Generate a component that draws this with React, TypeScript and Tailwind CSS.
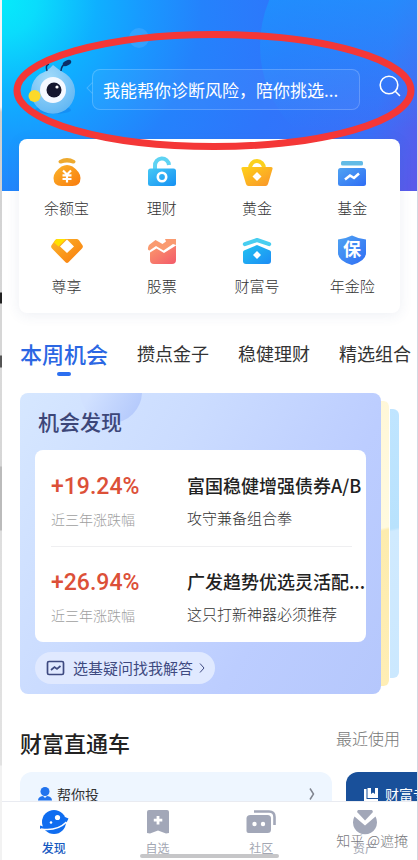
import type { ReactNode } from "react";

function Defs() {
  const grads: [string, string, string][] = [
    ["gOrange", "#fbb62c", "#f97a0c"],
    ["gGold", "#ffd21a", "#f9932a"],
    ["gCyan", "#45c8f5", "#1590f3"],
    ["gBlue", "#4fa3f2", "#2f6df5"],
    ["gRed", "#fb9a6c", "#f35a6a"],
    ["gSky", "#22c3f0", "#1c8cf5"],
  ];
  return (
    <svg className="absolute size-0" aria-hidden="true">
      <defs>
        {grads.map(([id, a, b]) => (
          <linearGradient key={id} id={id} x1="0" y1="0" x2="1" y2="1">
            <stop offset="0" stopColor={a} />
            <stop offset="1" stopColor={b} />
          </linearGradient>
        ))}
        <linearGradient id="gBlob" x1="0" y1="0" x2="0" y2="1">
          <stop offset="0.3" stopColor="#189cff" stopOpacity="0.6" />
          <stop offset="0.85" stopColor="#189cff" stopOpacity="0" />
        </linearGradient>
        <radialGradient id="gBody" cx="0.4" cy="0.3" r="0.8">
          <stop offset="0" stopColor="#a5dcfa" />
          <stop offset="1" stopColor="#5cb4f3" />
        </radialGradient>
      </defs>
    </svg>
  );
}

function Icon({ children }: { children: ReactNode }) {
  return (
    <svg viewBox="0 0 32 32" className="size-8" aria-hidden="true">
      {children}
    </svg>
  );
}

const services: { label: string; icon: ReactNode }[] = [
  {
    label: "余额宝",
    icon: (
      <Icon>
        <path d="M7.600 6.200Q7 5 8.300 4.200Q16 0 23.700 4.200Q25 5 24.400 6.200Q23.500 8 21.800 7.400Q16 5.400 10.200 7.400Q8.500 8 7.600 6.200Z" fill="#eda92e" />
        <path d="M10.500 10.500Q16 7.500 21.500 10.500Q29.500 16 29.500 22Q29.500 30 21.500 30H10.500Q2.500 30 2.500 22Q2.500 16 10.500 10.500Z" fill="url(#gOrange)" />
        <path d="M12 14.500l4 4 4-4M16 18.500v8M11.500 19.300h9M11.500 23h9" stroke="#fff" strokeWidth="2.200" fill="none" />
      </Icon>
    ),
  },
  {
    label: "理财",
    icon: (
      <Icon>
        <path d="M9 13V10a7 7 0 0 1 14-1" stroke="#5ed3f3" strokeWidth="4" fill="none" />
        <rect x="2" y="12.500" width="28" height="17.500" rx="2.500" fill="url(#gCyan)" />
        <circle cx="16" cy="21" r="4.200" fill="none" stroke="#fff" strokeWidth="2.600" />
      </Icon>
    ),
  },
  {
    label: "黄金",
    icon: (
      <Icon>
        <path d="M9 12.500a7 7.500 0 0 1 14 0" stroke="#fbd11e" strokeWidth="4" fill="none" />
        <path d="M2 11h28a1.500 1.500 0 0 1 1.500 2l-4.500 15q-.6 2-2.500 2h-17q-1.900 0-2.500-2L.5 13A1.500 1.500 0 0 1 2 11z" fill="url(#gGold)" />
        <path d="M16 16l4.500 4.500L16 25l-4.500-4.500z" fill="#fff" />
      </Icon>
    ),
  },
  {
    label: "基金",
    icon: (
      <Icon>
        <rect x="5" y="5" width="22" height="4.500" rx="1.500" fill="#63bbe6" />
        <rect x="2" y="12" width="28" height="18" rx="2.500" fill="url(#gBlue)" />
        <path d="M9 23.500l5-4 4 2.500 5-4.500" stroke="#fff" strokeWidth="2.500" fill="none" />
      </Icon>
    ),
  },
  {
    label: "尊享",
    icon: (
      <Icon>
        <path d="M6.500 5h19q1.500 0 2.500 1.200l3.500 5q1 1.800-.5 3.300L17.500 28.300q-1.500 1.500-3 0L1 14.500Q-.5 13 .5 11.200l3.500-5Q5 5 6.500 5z" fill="url(#gOrange)" />
        <path d="M6 5h9L7.500 12.500 3 8.500 4.500 6z" fill="#ffe100" />
        <path d="M16 5.500l7 7L16 19l-7-6.500z" fill="#fff" />
      </Icon>
    ),
  },
  {
    label: "股票",
    icon: (
      <Icon>
        <path d="M3 11l6.500-5 7 4 3.500-2.500-1-2.500h11v6l-3-1-9.500 6.500-7.500-4.500-6.500 4.500q-3-.500-.5-5.500z" fill="#fa9a70" />
        <path d="M4 18.500l6.500-4 7.500 4.500L30 11.500V26q0 4-4 4H8q-4 0-4-4z" fill="url(#gRed)" />
      </Icon>
    ),
  },
  {
    label: "财富号",
    icon: (
      <Icon>
        <path d="M3.800 10.200L16 6l12.200 4.200" stroke="#48cef0" strokeWidth="4" strokeLinecap="round" strokeLinejoin="round" fill="none" />
        <path d="M3 16.500L16 11l13 5.500q1 .5 1 1.500v9q0 3-3 3H5q-3 0-3-3v-9q0-1 1-1.500z" fill="url(#gSky)" />
        <path d="M16 17l4 4-4 4-4-4z" fill="#fff" />
      </Icon>
    ),
  },
  {
    label: "年金险",
    icon: (
      <Icon>
        <path d="M16 1.500q7 3.500 14 4V19q0 8-14 12Q2 27 2 19V5.500q7-.5 14-4z" fill="url(#gBlue)" />
        <text x="16" y="22" textAnchor="middle" fontSize="18" fontWeight="700" fill="#fff">保</text>
      </Icon>
    ),
  },
];

const funds = [
  { rate: "+19.24%", name: "富国稳健增强债券A/B", note: "攻守兼备组合拳" },
  { rate: "+26.94%", name: "广发趋势优选灵活配...", note: "这只打新神器必须推荐" },
];

function Mascot() {
  return (
    <svg viewBox="0 0 50 60" className="h-15 w-[50px] shrink-0" aria-hidden="true">
      <ellipse cx="27" cy="53" rx="18" ry="4" fill="#1560d8" opacity=".25" />
      <path d="M27 8Q34 14 40 17A22 22 0 1 1 14 17Q22 14 27 8z" fill="url(#gBody)" />
      <path d="M21 14q-2-6 2-7M35 14q0-5 5-8" stroke="#0c2f66" strokeWidth="1.500" fill="none" />
      <ellipse cx="41" cy="6" rx="4.500" ry="2.500" transform="rotate(-25 41 6)" fill="#0c2f66" />
      <circle cx="27" cy="33" r="13" fill="#f5f9ff" />
      <circle cx="28" cy="33" r="7.500" fill="#15172e" />
      <circle cx="31" cy="30" r="1.600" fill="#fff" />
      <circle cx="8.500" cy="39" r="6" fill="#fbd92a" />
    </svg>
  );
}

export default function App() {
  return (
    <div className="relative flex h-screen overflow-hidden bg-white font-['Noto_Sans_CJK_SC',sans-serif] text-[#333]">
      <Defs />
      <div className="w-[2px] shrink-0 bg-[linear-gradient(180deg,#f6f6f6_0,#f6f6f6_107px,#cfcfcf_112px,#d6d6d6_292px,#222_293px,#222_303px,#d6d6d6_304px,#d6d6d6_355px,#555_356px,#555_367px,#dadada_368px,#d6d6d6_466px,#bbb_467px,#bbb_530px,#dedede_531px,#e2e2e2_765px,#f2f2f2_766px)]" />
      <div className="relative flex min-w-0 flex-1 flex-col border-r border-[#d5d8e2]">
        <main className="min-h-0 flex-1 overflow-hidden">
          <header className="relative h-[191px] overflow-hidden bg-[radial-gradient(circle_at_0_0,#05ebfb_0,#0adcfc_35px,#0fb0ff_95px,#189aff_140px,#2482fc_200px,#2f75fb_290px,#3a70f8_390px,#5a5aea_450px)]">
            <svg className="absolute inset-0 size-full" aria-hidden="true">
              <circle cx="376" cy="46" r="118" fill="url(#gBlob)" />
              <circle cx="137" cy="38" r="10" fill="#7fc0ff" opacity=".25" />
            </svg>
            <div className="relative flex items-start pl-6 pt-[57px]">
              <Mascot />
              <label className="relative ml-4 mt-3 flex h-[41px] min-w-0 flex-1 items-center rounded-lg border border-white/20 bg-white/5 px-2.5">
                <span className="absolute -left-[5px] top-3.5 size-2 rotate-45 border-b border-l border-white/20" />
                <input
                  aria-label="搜索"
                  readOnly
                  value="我能帮你诊断风险，陪你挑选..."
                  className="w-full min-w-0 bg-transparent text-[17px] text-white outline-none"
                />
              </label>
              <button aria-label="搜索" className="ml-[17px] mr-3.5 mt-4">
                <svg viewBox="0 0 26 26" className="size-[26px]" fill="none" stroke="#fff" strokeWidth="1.600" strokeLinecap="round">
                  <circle cx="12" cy="12" r="8.800" />
                  <path d="M18.500 18.500l4 4" />
                </svg>
              </button>
            </div>
          </header>

          <section className="relative mx-[17px] -mt-13 grid h-[174px] grid-cols-4 content-start gap-y-1 rounded-lg bg-white pt-[17px] shadow-[0_2px_14px_rgba(60,80,130,0.09)]">
            {services.map((s) => (
              <button key={s.label} className="flex h-[74px] flex-col items-center text-[15px] font-light text-[#333]">
                {s.icon}
                <span className="mt-2 leading-6">{s.label}</span>
              </button>
            ))}
          </section>

          <nav className="mt-6 flex h-[42px] items-start gap-[29px] overflow-hidden whitespace-nowrap pl-[18px] text-[18px] leading-8">
            <button className="flex flex-col items-center text-[22px] font-medium text-[#2b67e3]">
              本周机会
              <span className="mt-[3px] h-1 w-3.5 rounded-full bg-[#2c6ff0]" />
            </button>
            <button>攒点金子</button>
            <button>稳健理财</button>
            <button>精选组合</button>
          </nav>

          <section className="relative ml-[18px] mr-9 mt-3.5">
            <div className="absolute -right-[18px] bottom-4 top-4 w-6 rounded-md bg-[linear-gradient(168deg,#c0e5ff_0,#b8e2fd_45%,#d0eafe_46%,#cbe8fe_100%)]" />
            <div className="absolute -right-[9px] bottom-2 top-2 w-6 rounded-md border-r border-white bg-[linear-gradient(168deg,#fff7d8_0,#fffadf_45%,#fdecae_46%,#ffeeb5_100%)]" />
            <div className="relative overflow-hidden rounded-lg bg-[linear-gradient(120deg,#d6e7ff_0,#cbdcff_35%,#bccdff_70%,#b5c7fc_100%)] px-[15px] pb-2.5">
              <div className="absolute -top-8 left-[60px] size-[62px] rounded-full bg-[linear-gradient(120deg,#d1e1ff_30%,#afc5fb)]" />
              <h2 className="relative pl-[3px] pt-3 text-[21px] font-medium leading-8 text-[#3c4678]">机会发现</h2>
              <div className="relative mt-[13px] rounded-lg bg-white pl-4">
                {funds.map((f, i) => (
                  <div key={f.rate} className="relative flex h-24 pt-[21px]">
                    {i > 0 && <span className="absolute left-0 right-3.5 top-0 h-px bg-[#efeff1]" />}
                    <div className="w-[136px] shrink-0">
                      <p className="font-['Roboto',sans-serif] text-[23px] font-medium leading-8 text-[#dc5038]">{f.rate}</p>
                      <p className="mt-1 text-[14px] font-light leading-6 text-[#a0a0a0]">近三年涨跌幅</p>
                    </div>
                    <div className="min-w-0 flex-1 whitespace-nowrap">
                      <p className="text-[18px] font-medium leading-7 text-[#222]">{f.name}</p>
                      <p className="mt-[7px] text-[15px] font-light leading-6 text-[#333]">{f.note}</p>
                    </div>
                  </div>
                ))}
              </div>
              <button className="relative mt-2.5 flex h-8 items-center rounded-full bg-[#e0e9ff] pl-[11px] pr-2.5 text-[15px] text-[#3e4a80]">
                <svg viewBox="0 0 20 16" className="mr-[7px] h-4 w-5" fill="none" stroke="#3e4a80" strokeWidth="1.700" aria-hidden="true">
                  <rect x="1.500" y="1.500" width="16" height="13" rx="1.500" />
                  <path d="M5 10l3.500-3 2.500 2 3.500-3" />
                </svg>
                选基疑问找我解答
                <svg viewBox="0 0 6 10" className="ml-1.5 h-2.5 w-1.5" fill="none" stroke="#3e4a80" aria-hidden="true">
                  <path d="M1 .5L5 5 1 9.500" />
                </svg>
              </button>
            </div>
          </section>

          <section className="mt-[30px]">
            <div className="flex items-center justify-between pl-[18px] pr-[17px]">
              <h2 className="text-[22px] font-medium leading-9 text-[#222]">财富直通车</h2>
              <a href="#recent" className="mb-2 text-[16px] font-light leading-7 text-[#777]">最近使用</a>
            </div>
            <div className="mt-3 flex gap-3.5 overflow-hidden pl-[18px] text-[14px]">
              <button className="flex h-20 w-[312px] shrink-0 items-start rounded-xl bg-[#eef6ff] px-[17px] pt-2.5 leading-6">
                <svg viewBox="0 0 16 16" className="mr-1 mt-1 size-4" fill="#2173ee" aria-hidden="true">
                  <circle cx="8" cy="5.500" r="4.500" />
                  <path d="M1 14.500q0-4 5-4.500l2 2 2-2q5 .5 5 4.500z" />
                </svg>
                帮你投
                <svg viewBox="0 0 6 12" className="ml-auto mt-1.5 h-3 w-1.5" fill="none" stroke="#808590" strokeWidth="1.500" aria-hidden="true">
                  <path d="M1 .5L4.500 6 1 11.500" />
                </svg>
              </button>
              <button className="flex h-20 w-[312px] shrink-0 items-start rounded-xl bg-[#19509a] px-[17px] pt-2.5 leading-6 text-white">
                <svg viewBox="0 0 16 16" className="mr-1.5 mt-1 size-4" fill="#fff" aria-hidden="true">
                  <path d="M1 3h2.500v10H15v2H1zM4.500 2H8v6l2-1.500L12 8V2h3v10H4.500z" />
                </svg>
                财富专栏
              </button>
            </div>
          </section>
        </main>

        <nav className="relative grid h-[59px] shrink-0 grid-cols-4 border-t border-[#e9ebf1] bg-white text-[12px] text-[#a3a7b3]">
          <button className="flex flex-col items-center pt-1.5 font-medium text-[#1558c0]">
            <svg viewBox="0 0 30 28" className="h-7 w-[30px]" aria-hidden="true">
              <circle cx="15" cy="14" r="12" fill="#0f6df0" />
              <path d="M1 17.500Q13 22.500 26 9l3.500 1.500Q27 19 15 21.500 5 23.500 1 20.500z" fill="#0f6df0" />
              <path d="M2 21Q18 23.500 27.500 14" stroke="#fff" strokeWidth="1.600" fill="none" />
              <circle cx="18.500" cy="9.500" r="2.600" fill="#fff" />
              <circle cx="12" cy="14.500" r="1.300" fill="#fff" />
            </svg>
            <span className="leading-6">发现</span>
          </button>
          <button className="flex flex-col items-center pt-1.5">
            <svg viewBox="0 0 24 28" className="h-7 w-6" aria-hidden="true">
              <path d="M3 2h18q2 0 2 2v21l-3 .5-8-3-8 3-3-.5V4q0-2 2-2z" fill="#a2a7b8" />
              <path d="M12 8v8.500M7.800 12.200h8.500" stroke="#fff" strokeWidth="2.800" />
            </svg>
            <span className="leading-6">自选</span>
          </button>
          <button className="flex flex-col items-center pt-1.5">
            <svg viewBox="0 0 30 28" className="h-7 w-[30px]" aria-hidden="true">
              <path d="M8 3.500h15q5.500 0 5.500 5.500v8" stroke="#a2a7b8" strokeWidth="2.600" fill="none" />
              <path d="M4.500 7h17q3.500 0 3.500 3.500v11q0 3.500-3.500 3.500h-19Q.5 25 .5 23v-12.500Q.5 7 4.500 7z" fill="#a2a7b8" />
              <circle cx="8.500" cy="16" r="2.200" fill="#fff" />
              <circle cx="17" cy="16" r="2.200" fill="#fff" />
            </svg>
            <span className="leading-6">社区</span>
          </button>
          <button className="flex flex-col items-center pt-1.5">
            <svg viewBox="0 0 26 28" className="h-7 w-[26px]" aria-hidden="true">
              <path d="M2.500 8.500L13 17.500 23.500 8.500A12 12 0 1 1 2.500 8.500z" fill="#a2a7b8" />
              <path d="M6 2h14q1.500 1 .5 2.500L13 12.500 5.500 4.500Q4.500 3 6 2z" fill="#a2a7b8" />
            </svg>
            <span className="leading-6">资产</span>
          </button>
          <span className="absolute bottom-0.5 left-1/3 right-1/3 h-1 rounded-full bg-[#c6c6c8]" />
        </nav>
      </div>

      <p className="absolute bottom-2 right-2.5 text-[14px] font-light leading-6 text-[#77777c] [text-shadow:0_0_2px_#fff]">知乎 @遮掩</p>
      <svg viewBox="0 0 418 160" preserveAspectRatio="none" className="pointer-events-none absolute inset-x-0 top-0 h-40 w-full" fill="none" stroke="#f43737" strokeWidth="7" aria-hidden="true">
        <ellipse cx="214" cy="90.500" rx="197" ry="56" />
      </svg>
    </div>
  );
}
